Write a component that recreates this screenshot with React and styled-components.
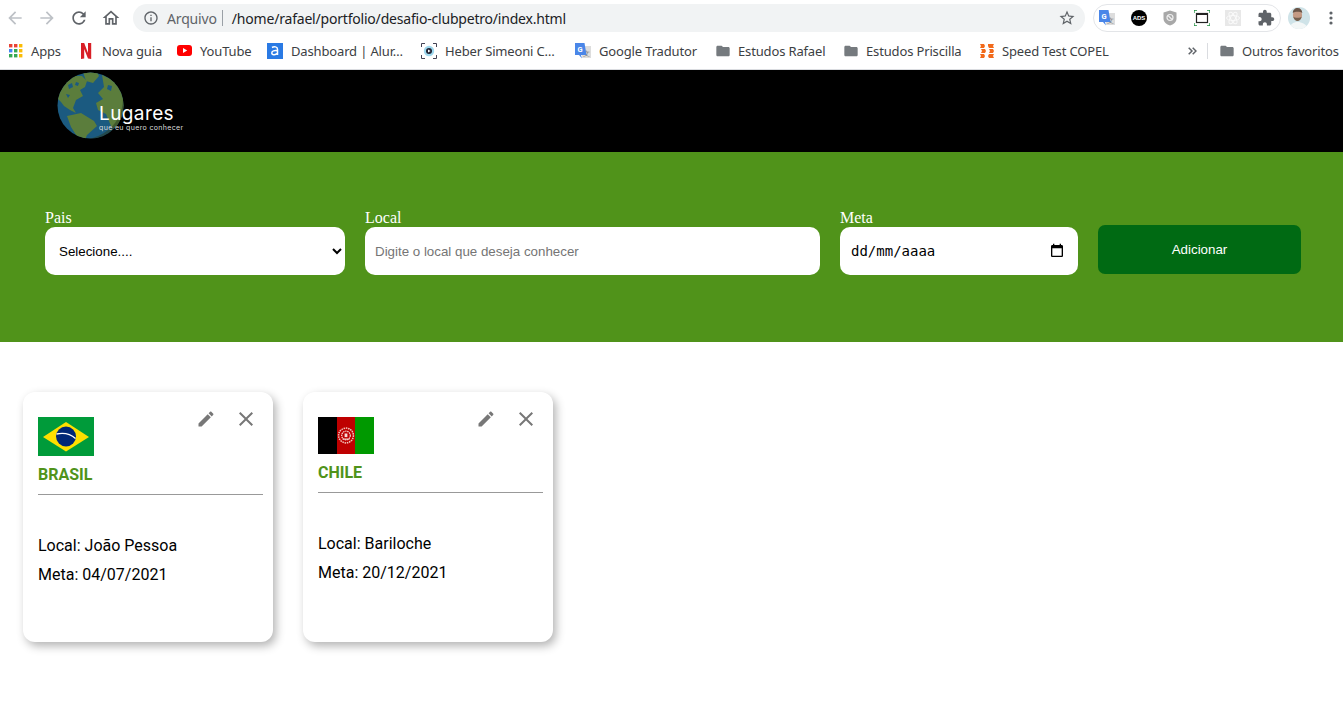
import React from "react";
import styled, { createGlobalStyle } from "styled-components";

const Global = createGlobalStyle`
  html, body { margin: 0; padding: 0; background: #fff; }
  body { width: 1343px; height: 709px; overflow: hidden; }
  * { box-sizing: border-box; }
`;

const Toolbar = styled.div`
  height: 36px; display: flex; align-items: center; background: #fff;
`;
const NavGroup = styled.div`
  display: flex; margin-left: -1px; flex: none;
`;
const NavBtn = styled.div`
  width: 32px; height: 28px; display: flex; align-items: center; justify-content: center; flex: none;
  color: ${p => p.$off ? "#bdc1c6" : "#5f6368"};
`;
const Omnibox = styled.div`
  margin-left: 6px; width: 952px; height: 28px; border-radius: 14px; background: #f1f3f4;
  display: flex; align-items: center; padding: 0 9px 0 10px; flex: none;
  font-family: "Noto Sans", sans-serif; font-size: 14px;
`;
const Scheme = styled.span`
  color: #5f6368; margin-left: 8px; letter-spacing: -0.15px;
`;
const Bar = styled.span`
  width: 1px; height: 16px; background: #9aa0a6; margin: 0 9px 0 5px;
`;
const Url = styled.span`
  color: #202124; flex: 1; font-size: 14px; letter-spacing: -0.2px;
`;
const ExtPill = styled.div`
  margin-left: 8px; width: 188px; height: 28px; border: 1px solid #e3e5e8; border-radius: 14px;
  display: flex; align-items: center; justify-content: space-between; padding: 0 5px 0 5px; flex: none;
`;
const Avatar = styled.div`
  margin-left: 7px; width: 22px; height: 22px; flex: none;
`;
const Dots = styled.div`
  margin-left: 13px; width: 16px; display: flex; justify-content: center; color: #5f6368; flex: none;
`;

const Bookmarks = styled.div`
  height: 34px; display: flex; align-items: center; padding: 0 0 4px 8px; background: #fff;
  border-bottom: 1px solid #dadce0;
  font-family: "Noto Sans", sans-serif; font-size: 13px; color: #3c4043; letter-spacing: -0.15px;
`;
const Mark = styled.div`
  width: ${p => p.$w}px; flex: none; display: flex; align-items: center; gap: ${p => p.$gap ?? 8}px; white-space: nowrap;
`;
const MarkIcon = styled.span`
  width: ${p => p.$w ?? 16}px; height: 16px; flex: none; display: flex; align-items: center; justify-content: center;
`;
const Chevrons = styled.div`
  margin-left: 69px; width: 19px; color: #5f6368; flex: none; display: flex; align-items: center;
`;
const BarSep = styled.div`
  width: 1px; height: 16px; background: #dadce0; margin-right: 11px; flex: none;
`;

const Header = styled.header`
  height: 82px; background: #000; display: flex; padding-left: 57px; padding-top: 2px;
`;
const Logo = styled.div`
  position: relative; width: 130px; height: 68px;
`;
const LogoName = styled.span`
  position: absolute; left: 42px; top: 30px; color: #fff; font-family: Inter, sans-serif;
  font-size: 19px; line-height: 24px; letter-spacing: 0.4px;
`;
const LogoTag = styled.span`
  position: absolute; left: 42px; top: 51px; color: #ddd; font-family: Inter, sans-serif;
  font-size: 7px; line-height: 9px; white-space: nowrap; letter-spacing: 0.35px;
`;

const FormBand = styled.form`
  height: 190px; background: #50931a; padding: 57px 42px 0 45px; display: flex; gap: 20px; align-items: flex-start;
`;
const Field = styled.label`
  width: ${p => p.$w}px; flex: none; display: flex; flex-direction: column;
  font-family: "Liberation Serif", serif; font-size: 16px; line-height: 18px; color: #fff;
`;
const Select = styled.select`
  height: 48px; border: none; border-radius: 10px; background: #fff; padding: 0 0 0 10px;
  font-family: "Liberation Sans", sans-serif; font-size: 13.33px; color: #000; width: 100%;
`;
const TextInput = styled.input`
  height: 48px; border: none; border-radius: 10px; background: #fff; padding: 0 10px;
  font-family: "Liberation Sans", sans-serif; font-size: 13.33px; width: 100%;
  &::placeholder { color: #757575; opacity: 1; }
`;
const DateBox = styled.div`
  height: 48px; border-radius: 10px; background: #fff; padding: 0 13px 0 11px; display: flex; align-items: center;
  justify-content: space-between; font-family: "DejaVu Sans Mono", monospace; font-size: 14px; color: #000;
`;
const Submit = styled.button`
  margin-top: 16px; width: 203px; height: 49px; border: none; border-radius: 7px;
  background: #006a13; color: #fff; font-family: "Liberation Sans", sans-serif; font-size: 13.33px; flex: none;
`;

const Cards = styled.main`
  display: flex; gap: 30px; padding: 50px 0 0 23px;
`;
const Card = styled.article`
  width: 250px; height: 250px; background: #fff; border-radius: 12px; padding: 25px 10px 0 15px;
  box-shadow: 3px 4px 10px rgba(0, 0, 0, 0.3); font-family: Roboto, sans-serif; color: #000;
`;
const CardTop = styled.div`
  display: flex; justify-content: space-between; align-items: flex-start;
`;
const Flag = styled.svg`
  width: 56px; height: ${p => p.$h}px; display: block;
`;
const Actions = styled.div`
  display: flex; align-items: center; gap: 14px; margin: -10px 5px 0 0; color: #777;
`;
const Action = styled.span`
  display: flex; width: ${p => p.$w}px; justify-content: center;
`;
const CardTitle = styled.h2`
  margin: 0; height: 38px; padding-top: 9px; font-size: 16px; line-height: 19px; font-weight: 700; color: #50931a;
`;
const Rule = styled.hr`
  margin: 0; border: none; height: 1px; background: #999;
`;
const Lines = styled.div`
  padding-top: 36px; font-size: 16px; line-height: 29px;
`;

const Ic = ({ d, size = 24, color = "currentColor", vb = "0 0 24 24" }) => (
  <svg width={size} height={size} viewBox={vb} fill={color}><path d={d} /></svg>
);

const P = {
  back: "M20 11H7.83l5.59-5.59L12 4l-8 8 8 8 1.41-1.41L7.83 13H20v-2z",
  fwd: "M12 4l-1.41 1.41L16.17 11H4v2h12.17l-5.58 5.59L12 20l8-8z",
  reload: "M17.65 6.35C16.2 4.9 14.21 4 12 4c-4.42 0-7.99 3.58-7.99 8s3.57 8 7.99 8c3.73 0 6.84-2.55 7.73-6h-2.08c-.82 2.33-3.04 4-5.65 4-3.31 0-6-2.69-6-6s2.69-6 6-6c1.66 0 3.14.69 4.22 1.78L13 11h7V4l-2.35 2.35z",
  home: "M12 5.69l5 4.5V18h-2v-6H9v6H7v-7.81l5-4.5M12 3L2 12h3v8h6v-6h2v6h6v-8h3L12 3z",
  info: "M11 7h2v2h-2zm0 4h2v6h-2zm1-9C6.48 2 2 6.48 2 12s4.48 10 10 10 10-4.48 10-10S17.52 2 12 2zm0 18c-4.41 0-8-3.59-8-8s3.59-8 8-8 8 3.59 8 8-3.59 8-8 8z",
  star: "M22 9.24l-7.19-.62L12 2 9.19 8.63 2 9.24l5.46 4.73L5.82 21 12 17.27 18.18 21l-1.63-7.03L22 9.24zM12 15.4l-3.76 2.27 1-4.28-3.32-2.88 4.38-.38L12 6.1l1.71 4.04 4.38.38-3.32 2.88 1 4.28L12 15.4z",
  puzzle: "M20.5 11H19V7c0-1.1-.9-2-2-2h-4V3.5C13 2.12 11.88 1 10.5 1S8 2.12 8 3.5V5H4c-1.1 0-1.99.9-1.99 2v3.8H3.5c1.49 0 2.7 1.21 2.7 2.7s-1.21 2.7-2.7 2.7H2V20c0 1.1.9 2 2 2h3.8v-1.5c0-1.49 1.21-2.7 2.7-2.7 1.49 0 2.7 1.21 2.7 2.7V22H17c1.1 0 2-.9 2-2v-4h1.5c1.38 0 2.5-1.12 2.5-2.5S21.88 11 20.5 11z",
  folder: "M10 4H4c-1.1 0-1.99.9-1.99 2L2 18c0 1.1.9 2 2 2h16c1.1 0 2-.9 2-2V8c0-1.1-.9-2-2-2h-8l-2-2z",
  edit: "M3 17.25V21h3.75L17.81 9.94l-3.75-3.75L3 17.25zM20.71 7.04c.39-.39.39-1.02 0-1.41l-2.34-2.34c-.39-.39-1.02-.39-1.41 0l-1.83 1.83 3.75 3.75 1.83-1.83z",
  close: "M19 6.41L17.59 5 12 10.59 6.41 5 5 6.41 10.59 12 5 17.59 6.41 19 12 13.41 17.59 19 19 17.59 13.41 12z",
};

const GTranslate = ({ size = 16 }) => (
  <svg width={size} height={size} viewBox="0 0 16 16">
    <rect x="7" y="3" width="9" height="12" fill="#ddd" />
    <text x="11.5" y="12.5" fontSize="7" fill="#777" textAnchor="middle" fontFamily="Noto Sans">文</text>
    <path d="M0 0h9.5l2 12H6l1 3.5L4 12H0z" fill="#4a86e8" />
    <text x="5" y="8.6" fontSize="7.5" fontWeight="700" fill="#fff" textAnchor="middle" fontFamily="Roboto">G</text>
  </svg>
);

const AppsIcon = () => {
  const c = ["#ea4335", "#ea4335", "#fbbc05", "#4285f4", "#34a853", "#fbbc05", "#34a853", "#34a853", "#fbbc05"];
  return (
    <svg width="14" height="14" viewBox="0 0 14 14">
      {c.map((f, i) => <rect key={i} x={(i % 3) * 5} y={Math.floor(i / 3) * 5} width="3.4" height="3.4" fill={f} />)}
    </svg>
  );
};
const NetflixIcon = () => (
  <svg width="12" height="16" viewBox="0 0 12 16">
    <path d="M1 0h3.2l3.8 10V0h3.2v16l-3.2-.4L4.2 6v9.6L1 16z" fill="#d81f26" />
  </svg>
);
const YouTubeIcon = () => (
  <svg width="15" height="11" viewBox="0 0 15 11">
    <rect width="15" height="11" rx="3" fill="#f00" />
    <path d="M6 3v5l4.2-2.500z" fill="#fff" />
  </svg>
);
const AluraIcon = () => (
  <svg width="16" height="16" viewBox="0 0 16 16">
    <rect width="16" height="16" fill="#2a7ae4" />
    <path d="M5 4.5c2-1.3 5.5-1 5.5 1.8V12M10.5 7.8c-3-.6-5.7.1-5.7 2.2s3.6 2.2 5.7.4" fill="none" stroke="#fff" strokeWidth="1.5" />
  </svg>
);
const HeberIcon = () => (
  <svg width="16" height="16" viewBox="0 0 16 16" fill="none">
    <path d="M.5 4V.5H4M12 .5h3.5V4M15.5 12v3.5H12M4 15.5H.5V12" stroke="#445" strokeWidth="1" />
    <circle cx="8" cy="8" r="5.2" fill="#9fd8ee" />
    <circle cx="8" cy="8" r="3" fill="#223" />
    <path d="M7 6.4v3.2L9.6 8z" fill="#fff" />
  </svg>
);
const CopelIcon = () => (
  <svg width="15" height="16" viewBox="0 0 15 16" fill="#f26a1b">
    <path d="M0 1h4l1 2-1 2H0l1-2zM8 1h6l-1 2 1 2H9L8 3zM1 6h4l1 2-1 2H1l1-2zM9 6h4l1 2-1 2H9l1-2zM0 11h4l1 2-1 2H0l1-2zM9 11h5l-1 2 1 2H9l-1-2z" />
  </svg>
);
const DoubleChevron = () => (
  <svg width="9" height="8" viewBox="0 0 9 8" fill="none" stroke="currentColor" strokeWidth="1.500">
    <path d="M.7.7L4 4 .7 7.300M4.700.7L8 4 4.700 7.300" />
  </svg>
);

const Globe = () => (
  <svg width="68" height="68" viewBox="0 0 68 68" style={{ display: "block" }}>
    <defs><clipPath id="earth"><circle cx="33.500" cy="33.500" r="33" /></clipPath></defs>
    <g clipPath="url(#earth)">
      <rect width="68" height="68" fill="#1b5a80" />
      <g fill="#5b7d3c">
        <path d="M0 26L4 12 14 4l11 0 5 5-2 6-5 3 3 6-7 4-3 8 3 5-6-3-6-4-3-4z" />
        <path d="M26 0h14l2 4-6 7-7-2z" />
        <path d="M45 3l13 6 10 14v25l-8 10-6-4-5-12-8-4-2-7 7-4-5-6 6-6z" />
        <path d="M10 44l14-3 13 8 3 5-10 9-2 5-7-2-7-11z" />
      </g>
      <path d="M11 13l4-2 1 4-4 2zM19 10l3 1-1 3-3-1zM51 13l4 1-1 5-4-2zM9 22l4 1-2 3z" fill="#1b5a80" />
      <path d="M60 6a33 33 0 0 1-34 61 40 40 0 0 0 34-61z" fill="#2c3d20" opacity=".55" />
    </g>
  </svg>
);

const BrazilFlag = () => (
  <Flag $h={39} viewBox="0 0 56 39">
    <rect width="56" height="39" fill="#009b3a" />
    <path d="M5 20L28 5l23 15-23 14.500z" fill="#fedf00" />
    <circle cx="28" cy="19.500" r="10" fill="#002776" />
    <path d="M18.500 17c7-1.500 14 0 19 4.500" fill="none" stroke="#fff" strokeWidth="1.300" />
  </Flag>
);
const AfghanFlag = () => (
  <Flag $h={37} viewBox="0 0 56 37">
    <rect width="19" height="37" fill="#000" />
    <rect x="19" width="18" height="37" fill="#be0000" />
    <rect x="37" width="19" height="37" fill="#009900" />
    <circle cx="28" cy="18.500" r="7.400" fill="none" stroke="#f3c9c0" strokeWidth="1.500" strokeDasharray="1.500 .8" />
    <circle cx="28" cy="18.500" r="4.300" fill="none" stroke="#f6dcd6" strokeWidth="1.200" strokeDasharray="1.400 .7" />
    <rect x="26.600" y="16.500" width="2.800" height="3.600" fill="#f6dcd6" />
    <rect x="24.500" y="21.500" width="7" height="1.200" fill="#f3c9c0" />
  </Flag>
);

const Avatarimg = () => (
  <svg width="22" height="22" viewBox="0 0 22 22">
    <defs><clipPath id="av"><circle cx="11" cy="11" r="11" /></clipPath></defs>
    <g clipPath="url(#av)">
      <rect width="22" height="22" fill="#cfe3e8" />
      <ellipse cx="9.500" cy="8" rx="4.600" ry="5.600" fill="#c49a84" />
      <path d="M4.800 6c0-3 2-5 4.800-5s4.700 2 4.700 5c-2-1.600-7.500-1.600-9.500 0z" fill="#6a5548" />
      <path d="M5.200 9.500c1 3.500 2.500 4.500 4.300 4.500s3.300-1 4.300-4.500c-1 1.800-7.600 1.800-8.600 0z" fill="#75604f" />
      <path d="M1 24c0-6 4-9 8.500-9s11 3 11 9z" fill="#f3f7f7" />
    </g>
  </svg>
);

export default function App() {
  return (
    <>
      <Global />
      <Toolbar>
        <NavGroup>
          <NavBtn $off><Ic d={P.back} size={20} /></NavBtn>
          <NavBtn $off><Ic d={P.fwd} size={20} /></NavBtn>
          <NavBtn><Ic d={P.reload} size={20} /></NavBtn>
          <NavBtn><Ic d={P.home} size={20} /></NavBtn>
        </NavGroup>
        <Omnibox>
          <Ic d={P.info} size={16} color="#5f6368" />
          <Scheme>Arquivo</Scheme>
          <Bar />
          <Url>/home/rafael/portfolio/desafio-clubpetro/index.html</Url>
          <Ic d={P.star} size={18} color="#5f6368" />
        </Omnibox>
        <ExtPill>
          <GTranslate />
          <svg width="16" height="16" viewBox="0 0 16 16">
            <circle cx="8" cy="8" r="8" fill="#000" />
            <text x="8" y="10" fontSize="6" fontWeight="700" fill="#fff" textAnchor="middle" fontFamily="Liberation Sans">ADS</text>
          </svg>
          <svg width="16" height="16" viewBox="0 0 16 16">
            <path d="M8 .5l6.500 2v6c0 3.500-3 6-6.500 7-3.500-1-6.500-3.500-6.500-7v-6z" fill="#a8a8a8" />
            <circle cx="8" cy="7.500" r="3" fill="none" stroke="#eee" strokeWidth="1.200" />
            <path d="M6 5.500l4 4" stroke="#eee" strokeWidth="1.200" />
          </svg>
          <svg width="16" height="16" viewBox="0 0 16 16" fill="none">
            <path d="M0 3V0h3M13 0h3v3M16 13v3h-3M3 16H0v-3" stroke="#1e8e3e" strokeWidth="1.300" />
            <rect x="2.500" y="3.500" width="11" height="9" stroke="#222" strokeWidth="1.200" />
            <rect x="2.500" y="3" width="11" height="2" fill="#222" />
          </svg>
          <svg width="16" height="16" viewBox="0 0 16 16" fill="none">
            <rect width="16" height="16" fill="#e8e8e8" />
            <ellipse cx="8" cy="8" rx="6.500" ry="2.500" stroke="#fafafa" />
            <ellipse cx="8" cy="8" rx="6.500" ry="2.500" stroke="#fafafa" transform="rotate(60 8 8)" />
            <ellipse cx="8" cy="8" rx="6.500" ry="2.500" stroke="#fafafa" transform="rotate(120 8 8)" />
          </svg>
          <Ic d={P.puzzle} size={18} color="#5f6368" />
        </ExtPill>
        <Avatar><Avatarimg /></Avatar>
        <Dots>
          <svg width="4" height="14" viewBox="0 0 4 14" fill="currentColor">
            <circle cx="2" cy="2" r="1.600" /><circle cx="2" cy="7" r="1.600" /><circle cx="2" cy="12" r="1.600" />
          </svg>
        </Dots>
      </Toolbar>
      <Bookmarks>
        <Mark $w={72} $gap={7}><MarkIcon><AppsIcon /></MarkIcon>Apps</Mark>
        <Mark $w={97} $gap={10}><MarkIcon $w={12}><NetflixIcon /></MarkIcon>Nova guia</Mark>
        <Mark $w={90} $gap={8}><MarkIcon $w={15}><YouTubeIcon /></MarkIcon>YouTube</Mark>
        <Mark $w={154}><MarkIcon><AluraIcon /></MarkIcon>Dashboard | Alur…</Mark>
        <Mark $w={154}><MarkIcon><HeberIcon /></MarkIcon>Heber Simeoni C…</Mark>
        <Mark $w={140}><MarkIcon><GTranslate /></MarkIcon>Google Tradutor</Mark>
        <Mark $w={128} $gap={7}><MarkIcon><Ic d={P.folder} size={18} color="#757a7e" /></MarkIcon>Estudos Rafael</Mark>
        <Mark $w={136} $gap={7}><MarkIcon><Ic d={P.folder} size={18} color="#757a7e" /></MarkIcon>Estudos Priscilla</Mark>
        <Mark $w={140} $gap={7}><MarkIcon><CopelIcon /></MarkIcon>Speed Test COPEL</Mark>
        <Chevrons><DoubleChevron /></Chevrons>
        <BarSep />
        <Mark $w={120} $gap={7}><MarkIcon><Ic d={P.folder} size={18} color="#757a7e" /></MarkIcon>Outros favoritos</Mark>
      </Bookmarks>
      <Header>
        <Logo>
          <Globe />
          <LogoName>Lugares</LogoName>
          <LogoTag>que eu quero conhecer</LogoTag>
        </Logo>
      </Header>
      <FormBand>
        <Field $w={300}>
          Pais
          <Select defaultValue=""><option value="">Selecione....</option></Select>
        </Field>
        <Field $w={455}>
          Local
          <TextInput placeholder="Digite o local que deseja conhecer" />
        </Field>
        <Field $w={238}>
          Meta
          <DateBox>
            dd/mm/aaaa
            <svg width="16" height="16" viewBox="0 0 24 24" fill="#000">
              <path d="M19 3h-1V1h-2v2H8V1H6v2H5c-1.100 0-2 .9-2 2v14c0 1.100.9 2 2 2h14c1.100 0 2-.9 2-2V5c0-1.100-.9-2-2-2zm0 16H5V8h14v11z" />
            </svg>
          </DateBox>
        </Field>
        <Submit type="button">Adicionar</Submit>
      </FormBand>
      <Cards>
        <Card>
          <CardTop>
            <BrazilFlag />
            <Actions>
              <Action $w={28}><Ic d={P.edit} size={20} /></Action>
              <Action $w={24}><Ic d={P.close} size={24} /></Action>
            </Actions>
          </CardTop>
          <CardTitle>BRASIL</CardTitle>
          <Rule />
          <Lines>
            <div>Local: João Pessoa</div>
            <div>Meta: 04/07/2021</div>
          </Lines>
        </Card>
        <Card>
          <CardTop>
            <AfghanFlag />
            <Actions>
              <Action $w={28}><Ic d={P.edit} size={20} /></Action>
              <Action $w={24}><Ic d={P.close} size={24} /></Action>
            </Actions>
          </CardTop>
          <CardTitle>CHILE</CardTitle>
          <Rule />
          <Lines>
            <div>Local: Bariloche</div>
            <div>Meta: 20/12/2021</div>
          </Lines>
        </Card>
      </Cards>
    </>
  );
}
